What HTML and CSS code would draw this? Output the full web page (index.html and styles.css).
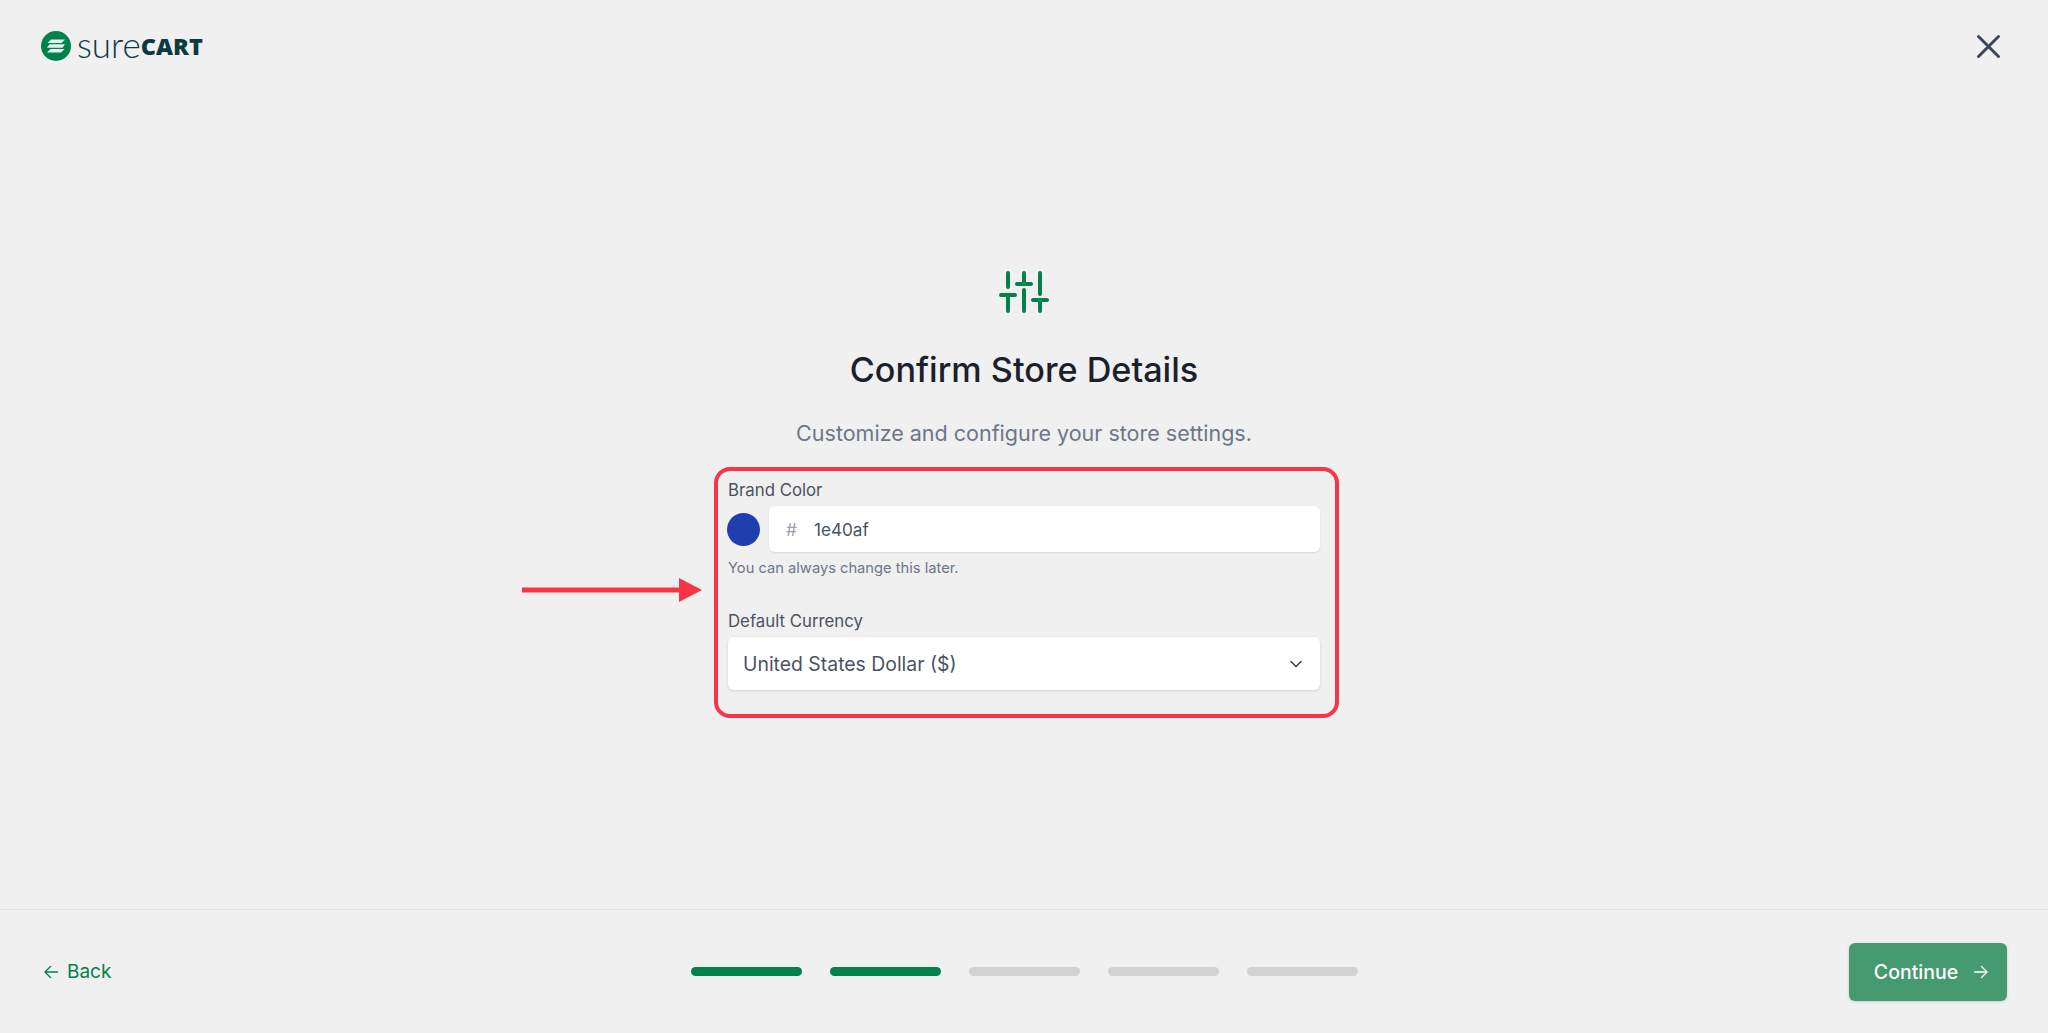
FILE: index.html
```html
<!DOCTYPE html>
<html lang="en">
<head>
    <meta charset="UTF-8">
    <meta name="viewport" content="width=device-width, initial-scale=1.0">
    <title>Confirm Store Details</title>
    <link rel="stylesheet" href="styles.css">
</head>
<body>
    <div class="page">
        <header class="top-bar">
            <div class="logo">
                <svg class="logo-mark" width="30" height="30" viewBox="0 0 30 30">
                    <circle cx="15" cy="15" r="15" fill="#01824c"/>
                    <path d="M10 8.500h14l-3.500 3.500H6.500z" fill="#e8f3ee"/>
                    <path d="M8.500 13.300h15.500l-2.500 3.400H6z" fill="#e8f3ee"/>
                    <path d="M9.500 18h14l-3.500 3.500H6z" fill="#e8f3ee"/>
                </svg>
                <span class="logo-sure">sure</span><span class="logo-cart">CART</span>
            </div>
            <svg class="close-icon" width="25" height="25" viewBox="0 0 25 25">
                <path d="M2.500 2.500l20 20M22.500 2.500l-20 20" stroke="#3c4659" stroke-width="3" stroke-linecap="round" fill="none"/>
            </svg>
        </header>

        <main class="content">
            <svg class="sliders-icon" width="50" height="42" viewBox="0 0 50 42">
                <g stroke="#01824c" stroke-width="4" stroke-linecap="round" fill="none">
                    <path d="M9 2v14M9 24v16M2 24h14"/>
                    <path d="M25 2v11M25 19v21M18 13h14"/>
                    <path d="M41 2v21M41 29v11M34 29h14"/>
                </g>
            </svg>
            <h1>Confirm Store Details</h1>
            <p class="subtitle">Customize and configure your store settings.</p>

            <div class="details-wrap">
                <svg class="callout-arrow" width="180" height="26" viewBox="0 0 180 26">
                    <path d="M0 10.500h157V1l23 12-23 12v-9.500H0z" fill="#f93444"/>
                </svg>
                <form class="details-box">
                    <label class="field-label">Brand Color</label>
                    <div class="color-row">
                        <span class="swatch"></span>
                        <div class="color-input">
                            <span class="hash">#</span>
                            <span>1e40af</span>
                        </div>
                    </div>
                    <p class="help-text">You can always change this later.</p>

                    <label class="field-label currency-label">Default Currency</label>
                    <div class="select-box">
                        <span>United States Dollar ($)</span>
                        <svg width="14" height="14" viewBox="0 0 14 14">
                            <path d="M2 4.500l5 5 5-5" stroke="#3c4659" stroke-width="1.600" stroke-linecap="round" stroke-linejoin="round" fill="none"/>
                        </svg>
                    </div>
                </form>
            </div>
        </main>

        <footer class="bottom-bar">
            <a class="back-link">
                <svg width="16" height="16" viewBox="0 0 16 16">
                    <path d="M14.500 8H2M7.500 2.500L2 8l5.500 5.500" stroke="#01824c" stroke-width="1.400" stroke-linecap="round" stroke-linejoin="round" fill="none"/>
                </svg>
                Back
            </a>
            <div class="steps">
                <span class="step done"></span>
                <span class="step done"></span>
                <span class="step"></span>
                <span class="step"></span>
                <span class="step"></span>
            </div>
            <div class="footer-right">
                <button type="button" class="continue-btn">
                    Continue
                    <svg width="16" height="16" viewBox="0 0 16 16">
                        <path d="M1.500 8H14M8.500 2.500L14 8l-5.500 5.500" stroke="#fff" stroke-width="1.400" stroke-linecap="round" stroke-linejoin="round" fill="none"/>
                    </svg>
                </button>
            </div>
        </footer>
    </div>
</body>
</html>
```

FILE: styles.css
```css
* {
    box-sizing: border-box;
}
html, body {
    margin: 0;
    height: 100%;
}
body {
    background: #f0f0f0;
    font-family: Inter, "Liberation Sans", sans-serif;
    color: #4a5362;
}
.page {
    display: flex;
    flex-direction: column;
    height: 1033px;
    overflow: hidden;
}

/* top bar */
.top-bar {
    display: flex;
    align-items: center;
    justify-content: space-between;
    height: 92px;
    padding: 0 47px 0 41px;
}
.logo {
    display: flex;
    align-items: center;
    color: #0d3a3f;
}
.logo-mark {
    margin-right: 6px;
}
.logo-sure {
    font-family: Lato, sans-serif;
    font-size: 35px;
    font-weight: 300;
    line-height: 30px;
    margin-top: -4px;
}
.logo-cart {
    font-family: "Open Sans", sans-serif;
    font-size: 23.500px;
    font-weight: 800;
    line-height: 30px;
}

/* centre column */
.content {
    flex: 1;
    display: flex;
    flex-direction: column;
    align-items: center;
    padding-top: 179px;
}
.sliders-icon {
    display: block;
}
h1 {
    margin: 35px 0 0;
    font-size: 34.200px;
    line-height: 44px;
    font-weight: 500;
    color: #1b212b;
}
.subtitle {
    margin: 25px 0 0;
    font-size: 21.500px;
    line-height: 32px;
    color: #6d7787;
}
.details-wrap {
    position: relative;
    margin: 18px 0 0 5px;
}
.callout-arrow {
    position: absolute;
    left: -192px;
    top: 110px;
}
.details-box {
    width: 625px;
    height: 251px;
    border: 4px solid #f93444;
    border-radius: 16px;
    padding: 7px 15px 0 10px;
}
.field-label {
    display: block;
    font-size: 16.800px;
    line-height: 24px;
    font-weight: 400;
    color: #4a5362;
}
.color-row {
    display: flex;
    align-items: center;
    gap: 9px;
    margin-top: 4px;
}
.swatch {
    width: 33px;
    height: 33px;
    margin-left: -1px;
    border-radius: 50%;
    background: #1e40af;
}
.color-input {
    flex: 1;
    display: flex;
    align-items: center;
    gap: 17px;
    height: 46px;
    padding: 0 17px;
    background: #fff;
    border-radius: 6px;
    box-shadow: 0 1px 2px rgba(0, 0, 0, 0.1);
    font-size: 17.200px;
}
.hash {
    color: #9aa1ad;
}
.help-text {
    margin: 5px 0 0;
    font-size: 14.700px;
    line-height: 22px;
    color: #6d7787;
}
.currency-label {
    margin-top: 30px;
}
.select-box {
    display: flex;
    align-items: center;
    justify-content: space-between;
    height: 53px;
    margin-top: 4px;
    padding: 0 17px 0 15px;
    background: #fff;
    border-radius: 6px;
    box-shadow: 0 1px 3px rgba(0, 0, 0, 0.14);
    font-size: 19.400px;
}

/* bottom bar */
.bottom-bar {
    display: grid;
    grid-template-columns: 1fr auto 1fr;
    align-items: center;
    height: 124px;
    padding: 0 41px;
    border-top: 1px solid #e2e2e2;
}
.back-link {
    display: flex;
    align-items: center;
    gap: 8px;
    margin-left: 2px;
    font-size: 19px;
    color: #01824c;
}
.steps {
    display: flex;
    gap: 28px;
}
.step {
    width: 111px;
    height: 9px;
    border-radius: 5px;
    background: #d2d2d2;
}
.step.done {
    background: #01824c;
}
.footer-right {
    display: flex;
    justify-content: flex-end;
}
.continue-btn {
    display: flex;
    align-items: center;
    justify-content: center;
    gap: 15px;
    width: 158px;
    height: 58px;
    padding: 0 0 0 7px;
    border: 0;
    border-radius: 6px;
    background: #459a6f;
    box-shadow: 0 1px 3px rgba(0, 0, 0, 0.15);
    color: #fff;
    font-family: inherit;
    font-size: 19.500px;
    font-weight: 500;
}
```
